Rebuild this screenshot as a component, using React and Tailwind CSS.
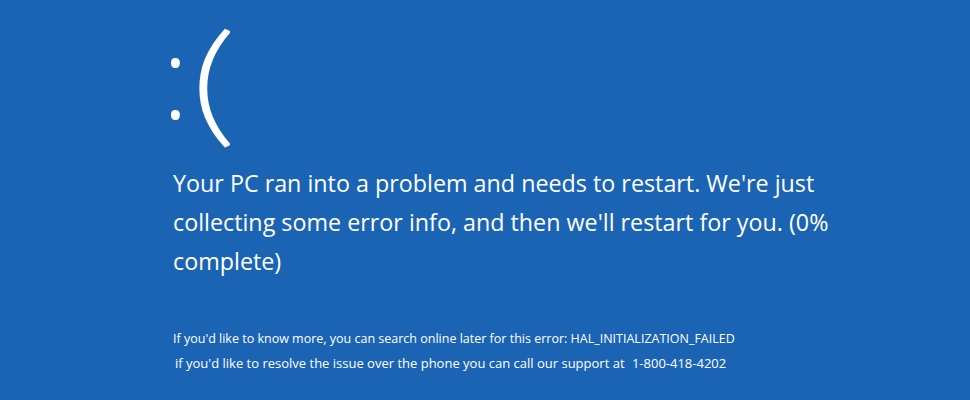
export default function App() {
    return (
        <div className="w-[970px] h-[400px] bg-[#1b64b4] text-white overflow-hidden" style={{ fontFamily: '"Open Sans", "Noto Sans", sans-serif' }}>
            <div className="pl-[173px]">
                {/* sad face */}
                <div className="flex h-[150px]">
                    <span className="block w-[20px] -ml-[11px] text-[112px] leading-[1.362] font-light">:</span>
                    <span
                        className="block ml-[14px] text-[132px] leading-[1.2] font-light scale-x-[1.4]"
                        style={{ fontFamily: 'Lato, "Open Sans", sans-serif' }}
                    >
                        (
                    </span>
                </div>

                <p className="mt-[14px] w-[680px] text-[23.3px] leading-[39px]">
                    Your PC ran into a problem and needs to restart. We're just collecting some error info, and then we'll restart for you. (0% complete)
                </p>

                <div className="mt-[46px]">
                    <p className="text-[12.5px] leading-[24px]">
                        If you'd like to know more, you can search online later for this error: HAL_INITIALIZATION_FAILED
                    </p>
                    <p className="pl-[2px] text-[13px] leading-[24px]">
                        if you'd like to resolve the issue over the phone you can call our support at <span className="ml-[4px]">1-800-418-4202</span>
                    </p>
                </div>
            </div>
        </div>
    );
}
